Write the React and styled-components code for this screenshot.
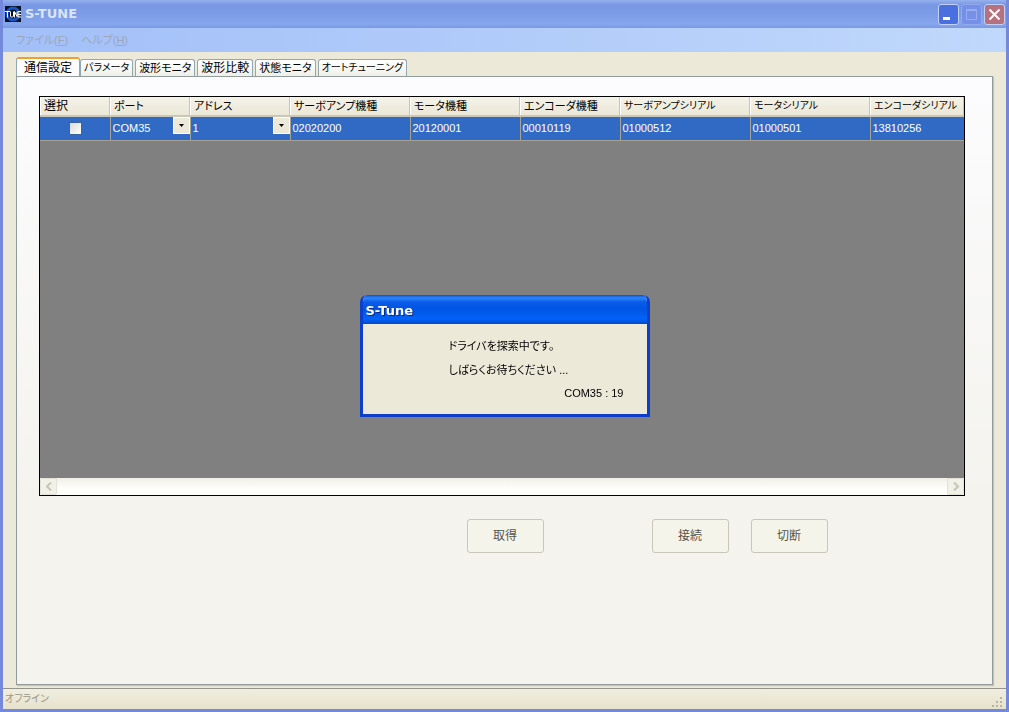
import React, { useState } from 'react'
import styled, { createGlobalStyle } from 'styled-components'

// kana-only labels are set smaller than the ones with kanji
const tabs = [
    { title: '通信設定', size: 12 },
    { title: 'パラメータ', size: 10 },
    { title: '波形モニタ', size: 11 },
    { title: '波形比較', size: 12 },
    { title: '状態モニタ', size: 11 },
    { title: 'オートチューニング', size: 10 },
]

const columns = [
    { title: '選択', width: 70, size: 12 },
    { title: 'ポート', width: 80, size: 11 },
    { title: 'アドレス', width: 100, size: 11 },
    { title: 'サーボアンプ機種', width: 120, size: 11 },
    { title: 'モータ機種', width: 110, size: 11 },
    { title: 'エンコーダ機種', width: 100, size: 11 },
    { title: 'サーボアンプシリアル', width: 130, size: 10 },
    { title: 'モータシリアル', width: 120, size: 10 },
    { title: 'エンコーダシリアル', size: 10 },
]

const drivers = [
    {
        port: 'COM35',
        address: '1',
        values: ['02020200', '20120001', '00010119', '01000512', '01000501', '13810256'],
    },
]

function AppIcon() {
    return (
        <svg width="16" height="16" viewBox="0 0 16 16" aria-hidden="true">
            <rect width="16" height="16" fill="#0a1420" />
            <circle cx="8" cy="8" r="6" fill="none" stroke="#1b55c4" strokeWidth="3" />
            <path d="M0 5.5h5M2.5 5.5v6M5.5 5.5v4.5q0 1 1 1h1q1 0 1-1V5.5M9.5 11.5v-6l2.5 5v-5M16 5.5h-3v5.5h3M13 8.5h3" fill="none" stroke="#fff" strokeWidth="1" />
        </svg>
    )
}

function TitleBar() {
    return (
        <Title>
            <AppIcon />
            <TitleText>S-TUNE</TitleText>
            <CaptionButton aria-label="最小化">
                <svg width="19" height="19" viewBox="0 0 19 19"><path d="M4 13.5h7" stroke="#fff" strokeWidth="3" /></svg>
            </CaptionButton>
            <CaptionButton aria-label="最大化" disabled>
                <svg width="19" height="19" viewBox="0 0 19 19"><path d="M4.500 4.500h10v10h-10zM4.500 5.500h10" fill="none" stroke="#98adf0" /></svg>
            </CaptionButton>
            <CaptionButton aria-label="閉じる" $close>
                <svg width="19" height="19" viewBox="0 0 19 19"><path d="M4.500 4.500l10 10M14.500 4.500l-10 10" stroke="#fff" strokeWidth="2" /></svg>
            </CaptionButton>
        </Title>
    )
}

function DropDown({ label, value }) {
    return (
        <Combo>
            <select aria-label={label} defaultValue={value}>
                <option>{value}</option>
            </select>
            <Arrow>
                <svg width="5" height="3" viewBox="0 0 5 3"><path d="M0 0h5L2.5 3z" fill="#000" /></svg>
            </Arrow>
        </Combo>
    )
}

function DriverTable() {
    return (
        <GridFrame>
            <Table>
                <colgroup>
                    {columns.map((col) => <Col key={col.title} $width={col.width} />)}
                </colgroup>
                <thead>
                    <tr>
                        {columns.map((col) => (
                            <HeaderCell key={col.title} scope="col" $size={col.size}>{col.title}</HeaderCell>
                        ))}
                    </tr>
                </thead>
                <tbody>
                    {drivers.map((driver) => (
                        <tr key={driver.port}>
                            <Cell><Check type="checkbox" aria-label="選択" /></Cell>
                            <Cell><DropDown label="ポート" value={driver.port} /></Cell>
                            <Cell><DropDown label="アドレス" value={driver.address} /></Cell>
                            {driver.values.map((value, index) => <Cell key={index}>{value}</Cell>)}
                        </tr>
                    ))}
                </tbody>
            </Table>
            <ScrollBar>
                <ScrollButton aria-label="左へ" disabled>
                    <svg width="8" height="9" viewBox="0 0 8 9"><path d="M6 .5l-4 4 4 4" fill="none" stroke="#c5c5ba" strokeWidth="2" /></svg>
                </ScrollButton>
                <ScrollButton aria-label="右へ" disabled>
                    <svg width="8" height="9" viewBox="0 0 8 9"><path d="M2 .5l4 4-4 4" fill="none" stroke="#c5c5ba" strokeWidth="2" /></svg>
                </ScrollButton>
            </ScrollBar>
        </GridFrame>
    )
}

function SearchDialog() {
    return (
        <Overlay>
            <Dialog role="dialog" aria-labelledby="search-title">
                <DialogTitle id="search-title">S-Tune</DialogTitle>
                <DialogBody>
                    <Message>
                        <p>ドライバを探索中です。</p>
                        <p>しばらくお待ちください ...</p>
                    </Message>
                    <Progress>COM35 : 19</Progress>
                </DialogBody>
            </Dialog>
        </Overlay>
    )
}

function App() {
    const [active, setActive] = useState(0)

    return (
        <>
            <GlobalStyle />
            <Window>
                <TitleBar />
                <MenuBar>
                    <MenuItem disabled>ファイル(<u>F</u>)</MenuItem>
                    <MenuItem disabled>ヘルプ(<u>H</u>)</MenuItem>
                </MenuBar>
                <Content>
                    <TabList role="tablist">
                        {tabs.map((tab, index) => (
                            <Tab
                                key={tab.title}
                                role="tab"
                                aria-selected={index === active}
                                $active={index === active}
                                $size={tab.size}
                                onClick={() => setActive(index)}
                            >
                                {tab.title}
                            </Tab>
                        ))}
                    </TabList>
                    <TabPage role="tabpanel">
                        <DriverTable />
                        <Actions>
                            <Button disabled>取得</Button>
                            <Connection>
                                <Button disabled>接続</Button>
                                <Button disabled>切断</Button>
                            </Connection>
                        </Actions>
                    </TabPage>
                </Content>
                <StatusBar>
                    <span>オフライン</span>
                    <svg width="12" height="12" viewBox="0 0 12 12" aria-hidden="true">
                        <path d="M8 0h2v2h-2zM4 4h2v2h-2zM8 4h2v2h-2zM0 8h2v2h-2zM4 8h2v2h-2zM8 8h2v2h-2z" fill="#b8b4a2" />
                    </svg>
                </StatusBar>
            </Window>
            <SearchDialog />
        </>
    )
}

export default App

const GlobalStyle = createGlobalStyle`
    * {
        box-sizing: border-box;
    }
    body {
        margin: 0;
        font-family: "Liberation Sans", "Noto Sans CJK JP", sans-serif;
        font-size: 11px;
        line-height: 16px;
        font-feature-settings: "palt";
        color: #000;
    }
    button, select, input {
        font: inherit;
        font-feature-settings: inherit;
        color: inherit;
        margin: 0;
        padding: 0;
    }
    p {
        margin: 0;
    }
    svg {
        display: block;
        flex: none;
    }
`

const Window = styled.div`
    display: flex;
    flex-direction: column;
    min-height: 100vh;
    border: 3px solid #7488dc;
    border-top: 0;
    background: #ece9d8;
`

const Title = styled.header`
    display: flex;
    align-items: center;
    gap: 2px;
    height: 28px;
    padding: 0 1px 0 2px;
    background: linear-gradient(#98b2ee 0, #8aa6ea 2px, #7898e4 5px, #7d9ce6 14px, #86a6ee 24px, #7c98e2 28px);
`

const TitleText = styled.h1`
    flex: 1;
    margin: 0 0 0 2px;
    font: bold 13px/16px "DejaVu Sans", sans-serif;
    color: #d8e4f8;
`

const CaptionButton = styled.button`
    display: grid;
    place-items: center;
    width: 21px;
    height: 21px;
    border: 1px solid ${props => props.disabled ? '#93a9ec' : '#c3cff5'};
    border-radius: 3px;
    background: ${props => props.$close ? '#b5727e' : props.disabled ? '#7590e6' : '#4a70e0'};
`

const MenuBar = styled.nav`
    display: flex;
    align-items: center;
    gap: 13px;
    height: 24px;
    padding: 0 13px;
    background: linear-gradient(90deg, #a2bff8, #c0d8fb);
`

const MenuItem = styled.button`
    border: 0;
    background: none;
    color: #9ca6b8;
`

const Content = styled.main`
    flex: 1;
    display: flex;
    flex-direction: column;
    padding: 5px 13px 3px;
`

const TabList = styled.div`
    display: flex;
    align-items: flex-end;
    gap: 2px;
    height: 19px;
`

const Tab = styled.button`
    height: ${props => props.$active ? '20px' : '17px'};
    margin: ${props => props.$active ? '0 -2px -1px 0' : '0'};
    padding: ${props => props.$active ? '0 7px' : '0 3px'};
    border: 1px solid #91a7b4;
    border-top: ${props => props.$active ? '2px solid #f0a030' : '1px solid #91a7b4'};
    border-bottom: 0;
    border-radius: 3px 3px 0 0;
    background: ${props => props.$active ? '#fcfcfe' : 'linear-gradient(#fff, #f0f0ea)'};
    font-size: ${props => props.$size}px;
    white-space: nowrap;
`

const TabPage = styled.section`
    flex: 1;
    display: flex;
    flex-direction: column;
    gap: 23px;
    padding: 19px 27px 131px 22px;
    border: 1px solid #919b9c;
    background: linear-gradient(#fcfcfe, #f4f3ee 70%);
    box-shadow: 1px 1px 1px #c8c5b4;
`

const GridFrame = styled.div`
    flex: 1;
    display: flex;
    flex-direction: column;
    justify-content: space-between;
    border: 1px solid #000;
    background: #808080;
`

const Table = styled.table`
    width: 100%;
    table-layout: fixed;
    border-collapse: collapse;
`

const Col = styled.col`
    width: ${props => props.$width ? props.$width + 'px' : 'auto'};
`

const HeaderCell = styled.th`
    height: 19px;
    padding: 0 0 1px 4px;
    border-bottom: 2px solid #cbc7b8;
    background: linear-gradient(#f4f2e8, #ebe8d8) padding-box;
    box-shadow: inset 1px 0 #fff, inset -1px 0 #c9c5b4;
    font-size: ${props => props.$size}px;
    font-weight: normal;
    text-align: left;
    white-space: nowrap;
`

const Cell = styled.td`
    height: 24px;
    padding: 0 0 0 2px;
    border-right: 1px solid #a5a295;
    border-bottom: 1px solid #a5a295;
    background: #316ac5;
    color: #fff;

    &:last-child {
        border-right: 0;
    }
`

const Check = styled.input`
    appearance: none;
    display: block;
    width: 13px;
    height: 13px;
    margin: 0 auto;
    border: 1px solid #3a629c;
    background: linear-gradient(135deg, #dcdcd6, #fff);
`

const Combo = styled.div`
    display: grid;
    grid-template-columns: 1fr 17px;
    align-items: center;
    height: 22px;

    select {
        grid-area: 1 / 1 / 2 / 3;
        appearance: none;
        border: 0;
        background: none;
    }
`

const Arrow = styled.span`
    grid-area: 1 / 2;
    align-self: start;
    display: grid;
    place-items: center;
    height: 17px;
    border: 1px solid #fff;
    background: #ece9d8;
    pointer-events: none;
`

const ScrollBar = styled.div`
    display: flex;
    justify-content: space-between;
    height: 17px;
    background: linear-gradient(#f0f0e8, #fefefa 60%);
`

const ScrollButton = styled.button`
    display: grid;
    place-items: center;
    width: 17px;
    height: 17px;
    border: 1px solid #e4e2d6;
    border-radius: 2px;
    background: #f2f1e8;
`

const Actions = styled.div`
    display: grid;
    grid-template-columns: 1fr 77px 1fr;
    padding-left: 6px;

    > :first-child {
        grid-column: 2;
    }
`

const Connection = styled.div`
    display: flex;
    gap: 22px;
    padding-left: 108px;
`

const Button = styled.button`
    width: 77px;
    height: 34px;
    border: 1px solid #c9c7ba;
    border-radius: 3px;
    background: #f5f4ea;
    font-size: 12px;
    color: #55554c;
`

const StatusBar = styled.footer`
    display: flex;
    align-items: center;
    justify-content: space-between;
    height: 21px;
    padding: 0 2px;
    border-top: 1px solid #96938a;
    background: linear-gradient(#f0eee0, #ece9d8 40%, #e6e2cc);
    font-size: 10px;
    color: #9a988a;

    svg {
        align-self: flex-end;
    }
`

const Overlay = styled.div`
    position: fixed;
    inset: 0;
    display: grid;
    place-items: center;
`

const Dialog = styled.div`
    width: 290px;
    border: 3px solid #0f3fc8;
    border-top: 0;
    border-radius: 7px 7px 0 0;
    background: #ece9d8;
    overflow: hidden;
`

const DialogTitle = styled.h2`
    margin: 0 -3px;
    padding: 8px 6px 5px;
    background: linear-gradient(#0a4fd0 0, #2f86fa 3px, #0a5ce8 7px, #0054e3 14px, #0363f8 24px, #0048cc 29px);
    font: bold 13px/16px "DejaVu Sans", sans-serif;
    color: #fff;
    text-shadow: 1px 1px #0a2a80;
`

const DialogBody = styled.div`
    display: flex;
    flex-direction: column;
    padding: 10px 23px 10px 86px;
`

const Message = styled.div`
    line-height: 24px;
`

const Progress = styled.p`
    line-height: 22px;
    text-align: right;
`
